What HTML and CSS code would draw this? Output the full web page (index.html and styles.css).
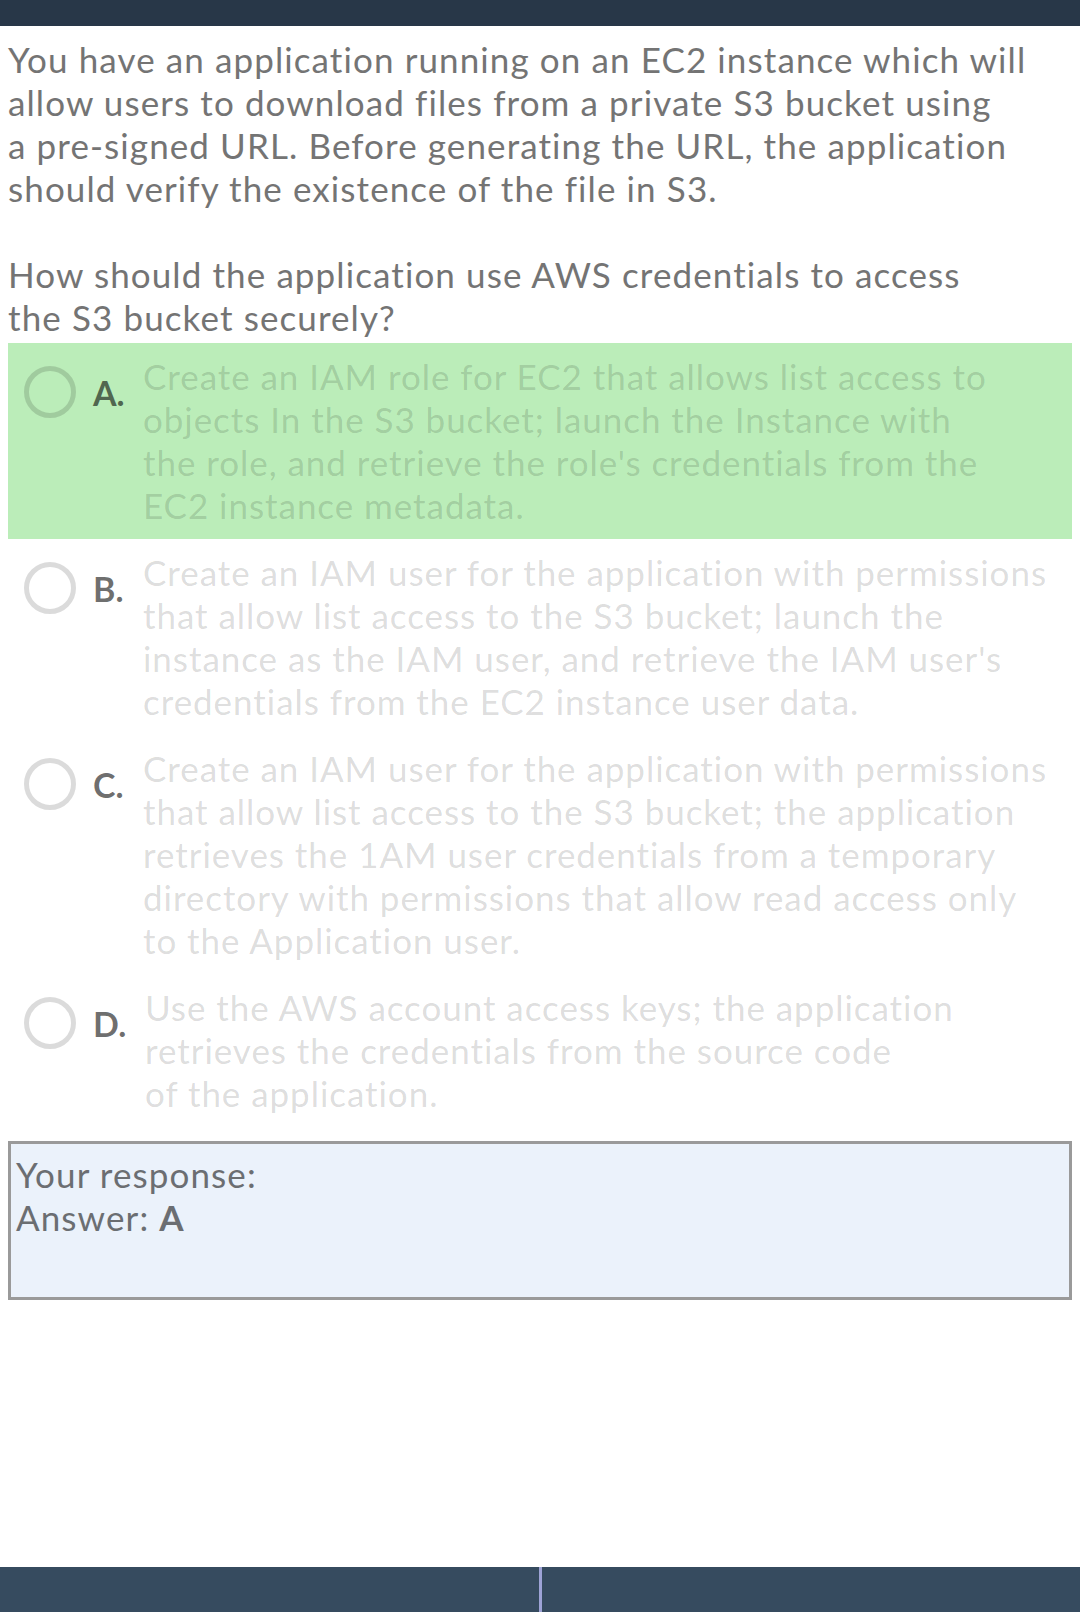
FILE: index.html
```html
<!DOCTYPE html>
<html lang="en">
<head>
<meta charset="utf-8">
<title>Question</title>
<link rel="stylesheet" href="styles.css">
</head>
<body>
<div class="page">
  <header class="topbar"></header>
  <main class="content">
    <p class="question">You have an application running on an EC2 instance which will<br>allow users to download files from a private S3 bucket using<br>a pre-signed URL. Before generating the URL, the application<br>should verify the existence of the file in S3.</p>
    <p class="question">How should the application use AWS credentials to access<br>the S3 bucket securely?</p>
    <ul class="options">
      <li class="option correct">
        <div class="marker"><span class="radio"></span><span class="letter">A.</span></div>
        <div class="option-text">Create an IAM role for EC2 that allows list access to<br>objects In the S3 bucket; launch the Instance with<br>the role, and retrieve the role's credentials from the<br>EC2 instance metadata.</div>
      </li>
      <li class="option">
        <div class="marker"><span class="radio"></span><span class="letter">B.</span></div>
        <div class="option-text">Create an IAM user for the application with permissions<br>that allow list access to the S3 bucket; launch the<br>instance as the IAM user, and retrieve the IAM user's<br>credentials from the EC2 instance user data.</div>
      </li>
      <li class="option">
        <div class="marker"><span class="radio"></span><span class="letter">C.</span></div>
        <div class="option-text">Create an IAM user for the application with permissions<br>that allow list access to the S3 bucket; the application<br>retrieves the 1AM user credentials from a temporary<br>directory with permissions that allow read access only<br>to the Application user.</div>
      </li>
      <li class="option">
        <div class="marker"><span class="radio"></span><span class="letter">D.</span></div>
        <div class="option-text shifted">Use the AWS account access keys; the application<br>retrieves the credentials from the source code<br>of the application.</div>
      </li>
    </ul>
    <div class="response">
      <div>Your response:</div>
      <div>Answer: <strong>A</strong></div>
    </div>
  </main>
  <footer class="bottombar">
    <div class="tab"></div>
    <div class="divider"></div>
    <div class="tab"></div>
  </footer>
</div>
</body>
</html>
```
FILE: styles.css
```css
* { box-sizing: border-box; }
html, body { margin: 0; padding: 0; background: #ffffff; }
body {
  font-family: Lato, "Open Sans", sans-serif;
  font-variant-ligatures: none;
  letter-spacing: 1.1px;
}

.page {
  min-height: 100vh;
  display: flex;
  flex-direction: column;
}

.topbar {
  height: 26px;
  background: #283748;
}

.content {
  padding: 12px 8px 0 8px;
}

.question {
  margin: 0 0 43px 0;
  font-size: 35px;
  font-weight: 400;
  line-height: 43px;
  white-space: nowrap;
  color: #747474;
}
.question:nth-of-type(2) { margin-bottom: 4px; }

.options {
  list-style: none;
  margin: 0;
  padding: 0;
}

.option {
  display: flex;
  align-items: flex-start;
  padding: 12px 8px 12px 16px;
}
.option.correct { background: #bbedb9; }

.marker {
  display: flex;
  align-items: center;
  flex: none;
  margin-top: 11px;
}

.radio {
  width: 52px;
  height: 52px;
  border-radius: 50%;
  border: 5px solid rgba(0, 0, 0, 0.14);
  flex: none;
}

.letter {
  width: 67px;
  padding-left: 17px;
  font-size: 34px;
  font-weight: 700;
  line-height: 41px;
  letter-spacing: 0;
  color: rgba(0, 0, 0, 0.58);
}

.option-text {
  font-size: 35px;
  font-weight: 400;
  line-height: 43px;
  letter-spacing: 0.95px;
  white-space: nowrap;
  color: rgba(0, 0, 0, 0.15);
}
.option-text.shifted { padding-left: 2px; }

.response {
  margin-top: 14px;
  height: 159px;
  border: 3px solid #9a9a9a;
  background: #ebf2fb;
  padding: 9px 5px;
  font-size: 35px;
  font-weight: 400;
  line-height: 43px;
  color: #6b6e72;
}
.response strong { font-weight: 700; letter-spacing: 0; }

.bottombar {
  margin-top: auto;
  height: 45px;
  display: grid;
  grid-template-columns: 1fr 3px 1fr;
  background: #364b5f;
}
.divider { background: #9ea3d6; }
```
